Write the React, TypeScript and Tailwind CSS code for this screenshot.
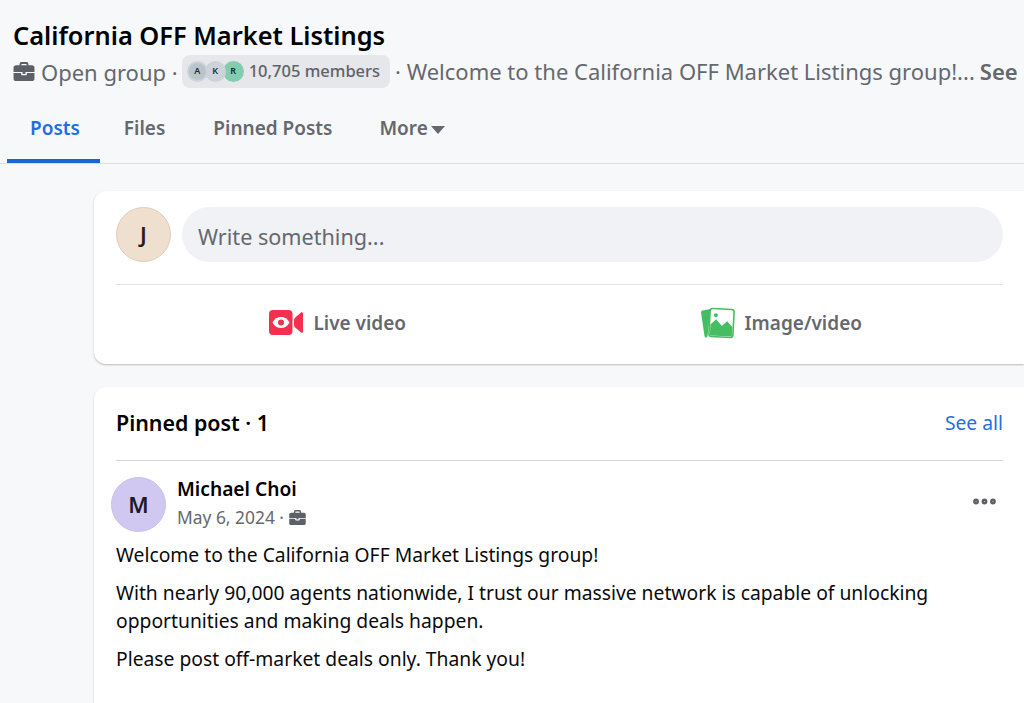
import { Ellipsis } from "lucide-react";

function BriefcaseIcon({ className }: { className: string }) {
  return (
    <svg viewBox="0 0 22 20" className={className} fill="currentColor">
      <path d="M6 4 6.600 1.200C6.800.4 7.300 0 8 0h6c.7 0 1.200.4 1.400 1.200L16 4h-2l-.4-2H8.400L8 4H6Z" />
      <path d="M2.500 3.500h17c1.200 0 2.500 1 2.500 2.300V10.500H0V5.800c0-1.300 1.300-2.300 2.500-2.300Z" />
      <path d="M0 11.500h8V13c0 .6.500 1 1 1h4c.5 0 1-.4 1-1v-1.500h8v6c0 1.300-1.100 2.500-2.500 2.500h-17C1.100 20 0 18.800 0 17.500v-6Z" />
      <rect x="9.500" y="10" width="3" height="2.500" />
    </svg>
  );
}

function LiveIcon() {
  return (
    <svg viewBox="0 0 34 26" className="h-[26px] w-[34px]">
      <rect x="0" y="0" width="23.500" height="25" rx="4" fill="#f5304f" />
      <path d="M3.500 12.500C5.500 8.800 8.500 7 12 7s6.500 1.800 8.500 5.500C18.500 16.200 15.500 18 12 18s-6.500-1.800-8.500-5.500Z" fill="#fff" />
      <circle cx="12" cy="12.500" r="3" fill="#f5304f" />
      <path d="M25 10.500C25 9 25.600 8 26.500 7.200L32 2.500c.8-.6 2-.2 2 1v18c0 1.200-1.200 1.600-2 1l-5.500-4.700C25.600 17 25 16 25 14.500Z" fill="#f5304f" />
    </svg>
  );
}

function ImageIcon() {
  return (
    <svg viewBox="0 0 34 32" className="h-[32px] w-[34px]">
      <path d="M1.500 3.500 9.500 2 6.500 29.500 5.500 30.500C4.500 30.800 3.800 30.200 3.500 29L0 5.500C0 4.500.6 3.800 1.500 3.500Z" fill="#45bd62" />
      <g transform="rotate(3 21 16)">
        <rect x="8.500" y="2" width="24" height="28" rx="2.500" fill="#fff" stroke="#45bd62" strokeWidth="1.600" />
        <circle cx="14.500" cy="8.500" r="2" fill="#45bd62" />
        <path d="M9.500 29V18L15 12.500 21 19 26 14 31.500 19.500V29Z" fill="#45bd62" />
      </g>
    </svg>
  );
}

function AvatarChip({ letter, className }: { letter: string; className: string }) {
  return (
    <span
      className={`flex h-[21px] w-[21px] items-center justify-center rounded-full text-[9px] font-semibold text-[#1c2b33] ${className}`}
    >
      {letter}
    </span>
  );
}

function Tab({ label, active }: { label: string; active?: boolean }) {
  return (
    <div
      className={`flex h-[64px] items-center border-b-[4px] pb-[2px] text-[19px] font-semibold ${
        active ? "border-[#1a65d6] pl-[23px] pr-[20px] text-[#1f6fe0]" : "border-transparent px-[24px] text-[#65686f]"
      }`}
    >
      {label}
    </div>
  );
}

export default function App() {
  return (
    <div className="h-[703px] w-[1024px] overflow-hidden bg-[#f7f8fa] font-['Noto_Sans','Open_Sans',sans-serif]">
      <header className="border-b border-[#dcdee2]">
        <div className="pl-[13px] pt-[17px]">
          <h1 className="text-[25.400px] leading-[36px] font-semibold text-black">
            California OFF Market Listings
          </h1>
          <div className="flex h-[36px] items-center whitespace-nowrap text-[22px] text-[#65686f]">
            <BriefcaseIcon className="mr-[6px] h-[19px] w-[22px] text-[#5d6067]" />
            <span className="mt-[2px]">Open group ·</span>
            <div className="ml-[4px] flex h-[33px] items-center rounded-[8px] bg-[#e6e7eb] pl-[5px] pr-[10px]">
              <div className="flex">
                <AvatarChip letter="A" className="z-30 border-2 border-[#ccd3d9] bg-[#b9c5cb]" />
                <AvatarChip letter="K" className="z-20 -ml-[3px] border-2 border-[#ccd3d9] bg-[#ccd3da]" />
                <AvatarChip letter="R" className="z-10 -ml-[3px] bg-[#83cdaf]" />
              </div>
              <span className="ml-[5px] text-[16.500px] font-medium text-[#5f6269]">10,705 members</span>
            </div>
            <span className="ml-[5px] mt-[1px]">· Welcome to the California OFF Market Listings group!...</span>
            <span className="ml-[5px] mt-[1px] font-semibold">See</span>
          </div>
        </div>
        <nav className="mt-[10px] flex pl-[7px]">
          <Tab label="Posts" active />
          <Tab label="Files" />
          <Tab label="Pinned Posts" />
          <div className="flex h-[64px] items-center border-b-[4px] border-transparent px-[23px] pb-[2px] text-[19px] font-semibold text-[#65686f]">
            More
            <span className="ml-[3px] mt-[3px] h-0 w-0 border-x-[7px] border-t-[8px] border-x-transparent border-t-[#65686f]" />
          </div>
        </nav>
      </header>

      <main className="ml-[94px] flex flex-col gap-[23px] pt-[27px]">
        <section className="rounded-l-[12px] bg-white pl-[22px] pr-[21px] pt-[16px] pb-[6px] shadow-[0_1px_2px_rgba(0,0,0,0.25)]">
          <div className="flex items-center gap-[11px] border-b border-[#e1e3e6] pb-[22px]">
            <div className="flex h-[55px] w-[55px] items-center justify-center rounded-full border border-[#e2cdb8] bg-[#efdfcf] text-[22px] font-semibold text-[#2b2018]">
              J
            </div>
            <div className="flex h-[55px] flex-1 items-center rounded-full bg-[#f0f2f6] px-[16px] pt-[5px] text-[21.600px] text-[#65686f]">
              Write something...
            </div>
          </div>
          <div className="flex h-[73px] items-center pt-[3px] text-[19px] font-semibold text-[#65686f]">
            <div className="flex flex-1 items-center justify-center gap-[10px]">
              <LiveIcon />
              Live video
            </div>
            <div className="flex flex-1 items-center justify-center gap-[10px]">
              <ImageIcon />
              Image/video
            </div>
          </div>
        </section>

        <section className="rounded-l-[12px] bg-white pl-[22px] pr-[21px] pb-[60px] shadow-[0_1px_2px_rgba(0,0,0,0.2)]">
          <div className="flex h-[74px] items-center justify-between border-b border-[#d4d6da]">
            <h2 className="text-[21.400px] font-semibold text-black">Pinned post · 1</h2>
            <span className="text-[19.300px] text-[#1f6fe0]">See all</span>
          </div>
          <div className="-ml-[5px] flex items-start pt-[16px]">
            <div className="flex h-[55px] w-[55px] items-center justify-center rounded-full border border-[#c9c0e8] bg-[#d0c8f0] text-[22px] font-semibold text-[#1c1a2a]">
              M
            </div>
            <div className="ml-[11px] flex-1">
              <div className="-mt-[1px] text-[19.200px] leading-[26px] font-semibold text-black">Michael Choi</div>
              <div className="mt-[3px] flex items-center text-[17.400px] leading-[24px] text-[#65686f]">
                May 6, 2024 ·
                <BriefcaseIcon className="ml-[5px] h-[15px] w-[17px] text-[#5d6067]" />
              </div>
            </div>
            <Ellipsis className="mr-[4px] mt-[10px] h-[29px] w-[29px] text-[#5d6067]" strokeWidth={2.8} />
          </div>
          <div className="pt-[9px] text-[19.300px] leading-[28px] text-[#0a0a0a]">
            <p>Welcome to the California OFF Market Listings group!</p>
            <p className="mt-[10px]">
              With nearly 90,000 agents nationwide, I trust our massive network is capable of unlocking
              <br />
              opportunities and making deals happen.
            </p>
            <p className="mt-[10px]">Please post off-market deals only. Thank you!</p>
          </div>
        </section>
      </main>
    </div>
  );
}
